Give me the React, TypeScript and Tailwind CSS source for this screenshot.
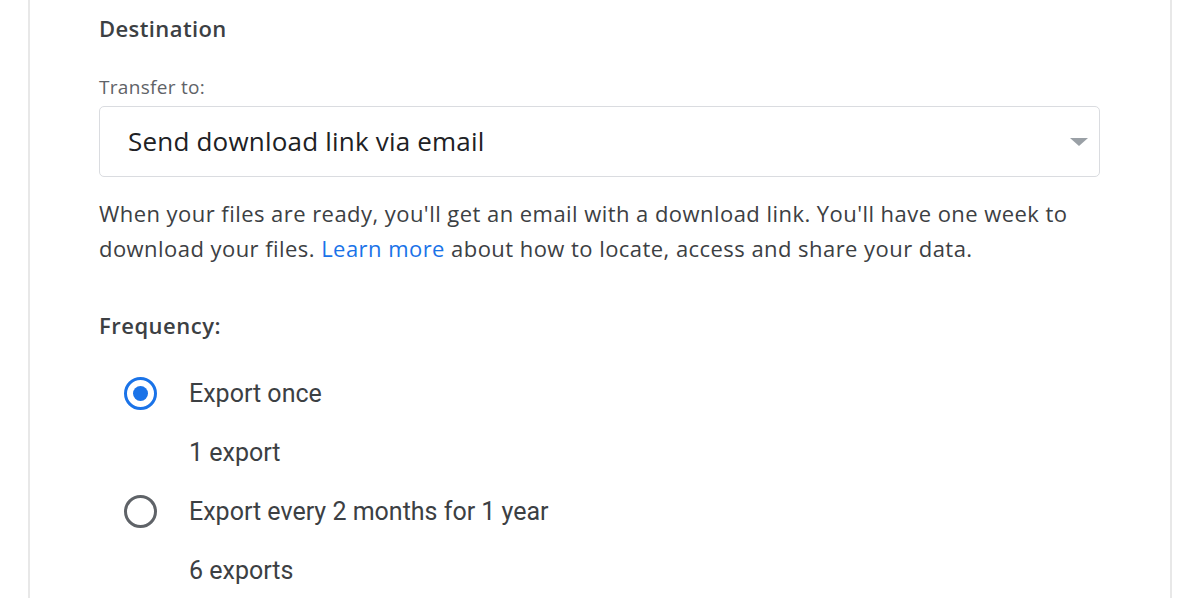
import React from 'react';

const options = [
  { label: 'Export once', count: '1 export', checked: true },
  { label: 'Export every 2 months for 1 year', count: '6 exports', checked: false },
];

const Radio: React.FC<{ checked: boolean }> = ({ checked }) => (
  <span
    className={`flex h-[33px] w-[33px] shrink-0 items-center justify-center rounded-full border-[3px] ${
      checked ? 'border-[#1a73e8]' : 'border-[#5f6368]'
    }`}
  >
    {checked && <span className="h-[15px] w-[15px] rounded-full bg-[#1a73e8]" />}
  </span>
);

export default function App() {
  return (
    <div className="h-[598px] w-[1200px] overflow-hidden bg-white font-['Open_Sans',sans-serif]">
      <div className="mx-[28px] h-full border-x-2 border-[#e8e8e8] pl-[69px] pr-[69px]">
        <h2 className="pt-[13px] text-[22px] font-semibold leading-[30px] tracking-[0.4px] text-[#3c4043]">
          Destination
        </h2>

        <div className="mt-[33px] text-[19px] leading-[22px] tracking-[0.3px] text-[#5f6368]">Transfer to:</div>
        <div className="mt-[8px] flex h-[71px] w-[1001px] items-center justify-between rounded-[5px] border border-[#dadce0] pl-[28px] pr-[10px]">
          <span className="text-[26px] tracking-[0.2px] text-[#202124]">Send download link via email</span>
          <svg width="20" height="10" viewBox="0 0 20 10">
            <path d="M1 1 L19 1 L10 9 Z" fill="#9aa0a6" />
          </svg>
        </div>

        <p className="mt-[19px] text-[22px] leading-[35px] tracking-[0.45px] text-[#3c4043]">
          When your files are ready, you'll get an email with a download link. You'll have one week to
          <br />
          download your files. <span className="text-[#1a73e8]">Learn more</span> about how to locate,
          access and share your data.
        </p>

        <div className="mt-[44px] text-[22px] font-semibold leading-[30px] tracking-[0.5px] text-[#3c4043]">
          Frequency:
        </div>

        <div className="mt-[24px] flex flex-col pl-[25px] font-['Roboto',sans-serif]">
          {options.map((o) => (
            <div key={o.label} className="flex flex-col">
              <label className="flex h-[59px] items-center gap-[32px]">
                <Radio checked={o.checked} />
                <span className="text-[25px] text-[#3c4043]">{o.label}</span>
              </label>
              <div className="flex h-[59px] items-center pl-[65px] text-[25px] text-[#3c4043]">
                {o.count}
              </div>
            </div>
          ))}
        </div>
      </div>
    </div>
  );
}
